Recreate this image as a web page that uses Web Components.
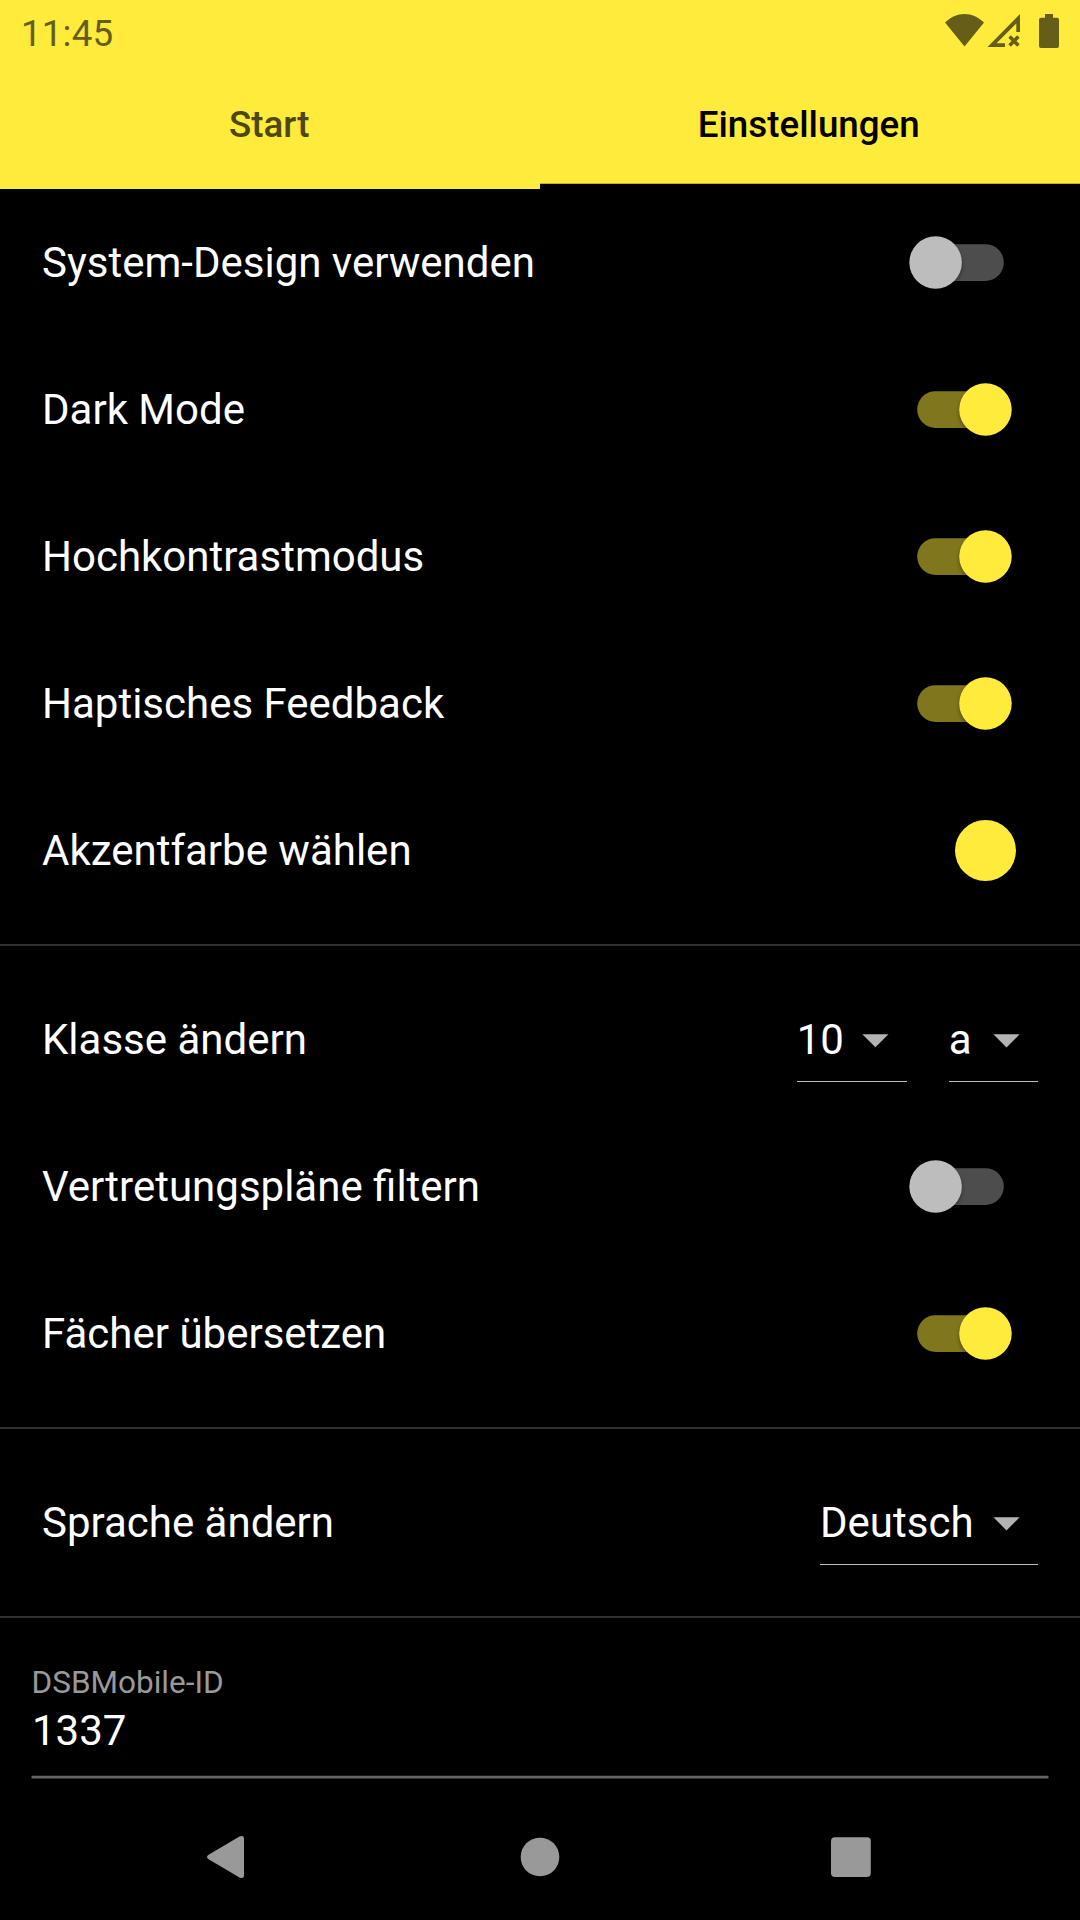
<!DOCTYPE html>
<html lang="de">
<head>
<meta charset="utf-8">
<title>Einstellungen</title>
<style>
html,body{margin:0;padding:0;background:#000}
body{width:1080px;height:1920px;overflow:hidden;font-family:Roboto,"Noto Sans",sans-serif;color:#fff}
</style>
</head>
<body>
<settings-screen></settings-screen>
<script>
const define = (name, html, setup) => {
  const template = document.createElement('template');
  template.innerHTML = html;
  customElements.define(name, class extends HTMLElement {
    constructor() {
      super();
      this.attachShadow({ mode: 'open' }).append(template.content.cloneNode(true));
      if (setup) setup(this, this.shadowRoot);
    }
  });
};

define('status-bar', `
<style>
:host{display:flex;box-sizing:border-box;height:63px;padding:0 18px 0 21px;justify-content:space-between;color:#665e18}
time{font-size:36.75px;line-height:43px;padding-top:12px;letter-spacing:.15px}
svg{display:block;width:120px;height:63px}
</style>
<time>11:45</time>
<svg viewBox="942 0 120 63" fill="currentColor">
  <path d="M945 22.6C950.5 17.3 957.5 14 964.5 14S978.500 17.300 984 22.600L964.500 46.500Z"/>
  <path d="M1020 14V32H1016.300V23.500L996.500 43.200H1005V47H987.500Z"/>
  <path d="M1009.600 36.600L1018.400 45.400M1018.400 36.600L1009.600 45.400" stroke="currentColor" stroke-width="3.600"/>
  <path d="M1045 14H1053V17.700H1057Q1059 17.700 1059 19.700V46Q1059 48 1057 48H1041Q1039 48 1039 46V19.700Q1039 17.700 1041 17.700H1045Z"/>
</svg>`);

define('tab-item', `
<style>
:host{display:flex;flex:1;box-sizing:border-box;height:126px;align-items:center;justify-content:center;font-size:36.75px;line-height:43px;font-weight:500;color:#4d4712;padding:0 1px 3px 0}
:host([selected]){color:#000;padding-right:2px;background:linear-gradient(#0000 120px,#00000040 120px,#00000040 121px,#000 121px)}
</style>
<slot></slot>`);

define('tab-bar', `
<style>:host{display:flex;height:126px}</style><slot></slot>`);

define('setting-row', `
<style>
:host{display:flex;box-sizing:border-box;height:147px;padding:0 42px;align-items:center;justify-content:space-between;font-size:42px;line-height:49px}
.end{display:flex;gap:42px;align-items:center}
</style>
<span><slot></slot></span><div class="end"><slot name="control"></slot></div>`);

define('toggle-switch', `
<style>
:host{display:block;width:154.875px;height:105px}
svg{display:block;width:100%;height:100%;overflow:visible}
.track{fill:#4d4d4d}.knob{fill:#bdbdbd}.shadow{fill:#000;opacity:.35;filter:blur(2px)}
:host([on]) .track{fill:#80761e}
:host([on]) .knob{fill:#ffeb3b}
:host([on]) .thumb{transform:translateX(49.875px)}
</style>
<svg viewBox="0 0 154.875 105"><rect class="track" x="34.200" y="34.125" width="86.625" height="36.750" rx="18.375"/><g class="thumb"><circle class="shadow" cx="52.600" cy="55" r="26.250"/><circle class="knob" cx="52.600" cy="52.500" r="26.250"/></g></svg>`);

define('color-dot', `
<style>:host{display:block;width:61.4px;height:61.4px;border-radius:50%;background:#ffeb3b;margin-right:22px}</style>`);

define('drop-down', `
<style>
:host{display:flex;box-sizing:border-box;height:84px;align-items:center;border-bottom:1px solid #bdbdbd}
svg{display:block;width:63px;height:63px}
span{flex:1;white-space:nowrap}
</style>
<span><slot></slot></span><svg viewBox="0 0 63 63"><path d="M18.375 26.250H44.625L31.500 39.375Z" fill="#b3b3b3"/></svg>`,
(host, root) => { host.style.width = host.getAttribute('width') + 'px'; });

define('line-divider', `
<style>:host{display:flex;height:42px;align-items:center}i{flex:1;height:2px;background:#303030}</style><i></i>`);

define('text-field', `
<style>
:host{display:flex;flex-direction:column;margin:0 31px;height:141px;box-sizing:border-box;padding-top:26px}
label{font-size:31.5px;line-height:37px;color:#999;padding-left:.5px}
span{font-size:42px;line-height:49px;margin-top:5px;padding-left:1px;flex:1}
svg{display:block;width:1018px;height:4px}
</style>
<label><slot name="label"></slot></label><span><slot></slot></span>
<svg viewBox="0 0 1018 4"><path fill="#666" d="M.5 .8H1017.500V3.400H.5Z"/></svg>`);

define('nav-bar', `
<style>:host{display:block;height:126px;margin-top:auto}svg{display:block}</style>
<svg width="1080" height="126" viewBox="0 1794 1080 126" fill="#999">
<path d="M208.200 1855L239.500 1836.600Q244 1834.500 244 1839V1875Q244 1879.500 239.500 1877.400L208.200 1859Q205.800 1857 208.200 1855Z"/>
<circle cx="540" cy="1857" r="19.300"/>
<rect x="831" y="1837.200" width="39.800" height="39.800" rx="4"/>
</svg>`);

define('settings-screen', `
<style>:host{display:flex;flex-direction:column;width:1080px;height:1920px;background:#000}header{background:#ffeb3b}</style>
<header><status-bar></status-bar><tab-bar><tab-item>Start</tab-item><tab-item selected>Einstellungen</tab-item></tab-bar></header>
<setting-row>System-Design verwenden<toggle-switch slot="control"></toggle-switch></setting-row>
<setting-row>Dark Mode<toggle-switch slot="control" on></toggle-switch></setting-row>
<setting-row>Hochkontrastmodus<toggle-switch slot="control" on></toggle-switch></setting-row>
<setting-row>Haptisches Feedback<toggle-switch slot="control" on></toggle-switch></setting-row>
<setting-row>Akzentfarbe wählen<color-dot slot="control"></color-dot></setting-row>
<line-divider></line-divider>
<setting-row>Klasse ändern<drop-down slot="control" width="110">10</drop-down><drop-down slot="control" width="89.3">a</drop-down></setting-row>
<setting-row>Vertretungspläne filtern<toggle-switch slot="control"></toggle-switch></setting-row>
<setting-row>Fächer übersetzen<toggle-switch slot="control" on></toggle-switch></setting-row>
<line-divider></line-divider>
<setting-row>Sprache ändern<drop-down slot="control" width="218">Deutsch</drop-down></setting-row>
<line-divider></line-divider>
<text-field><span slot="label">DSBMobile-ID</span>1337</text-field>
<nav-bar></nav-bar>`);
</script>
</body>
</html>
